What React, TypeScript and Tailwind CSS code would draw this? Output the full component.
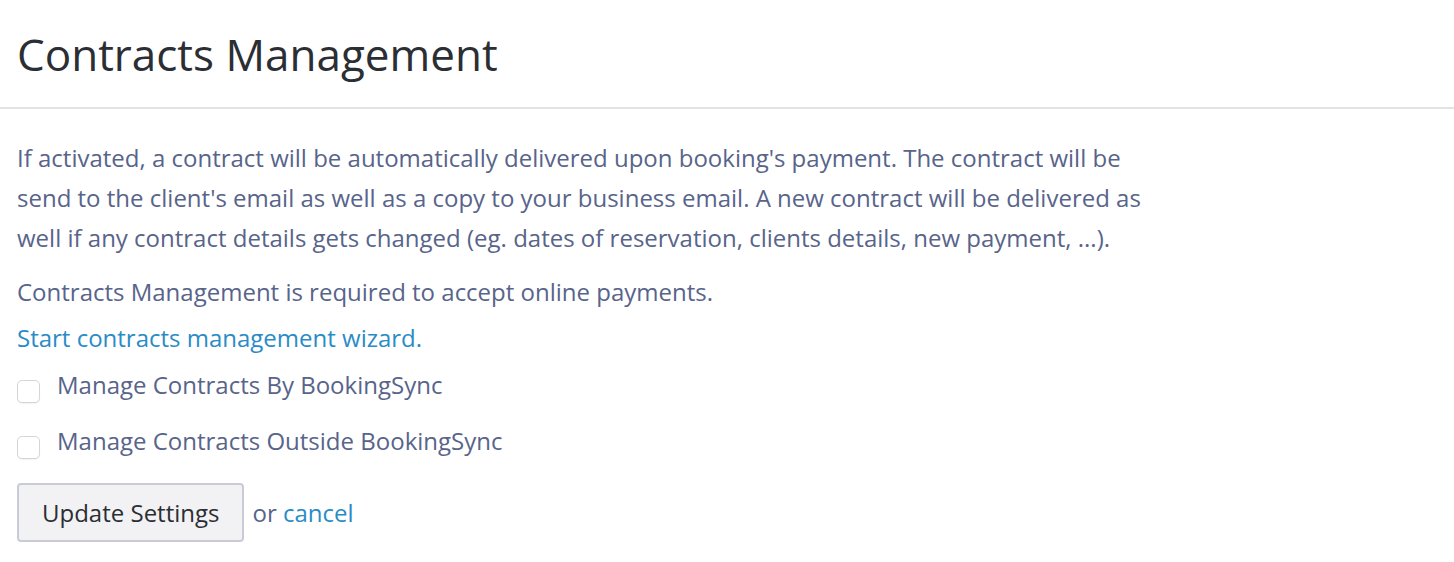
export default function App() {
  return (
    <div className="min-h-screen bg-white" style={{ fontFamily: '"Open Sans", sans-serif' }}>
      <header className="px-[17px] pt-[24px] pb-[23px] border-b-2 border-[#e3e3e3]">
        <h1 className="text-[44px] leading-[60px] text-[#2b2e33]">Contracts Management</h1>
      </header>
      <main className="px-[17px] text-[#58648a] text-[24px]">
        <p className="pt-[29px] leading-[40px] max-w-[1150px]">
          If activated, a contract will be automatically delivered upon booking's payment. The contract will be send to the client's email as well as a copy to your business email. A new contract will be delivered as well if any contract details gets changed (eg. dates of reservation, clients details, new payment, ...).
        </p>
        <p className="mt-[14px] leading-[40px]">Contracts Management is required to accept online payments.</p>
        <a href="#" className="block leading-[40px] mt-[6px] text-[#2a8cc6]">Start contracts management wizard.</a>
        <label className="flex items-center gap-[17px] h-[46px] mt-[4px]">
          <span className="w-[23px] h-[23px] mt-[12px] rounded-[5px] border border-[#d3d5da] bg-white shadow-[0_1px_1px_rgba(0,0,0,0.05)] shrink-0" />
          <span>Manage Contracts By BookingSync</span>
        </label>
        <label className="flex items-center gap-[17px] h-[46px] mt-[10px]">
          <span className="w-[23px] h-[23px] mt-[12px] rounded-[5px] border border-[#d3d5da] bg-white shadow-[0_1px_1px_rgba(0,0,0,0.05)] shrink-0" />
          <span>Manage Contracts Outside BookingSync</span>
        </label>
        <div className="flex items-center gap-[8px] mt-[19px]">
          <button className="h-[59px] px-[23px] rounded-[4px] border-2 border-[#c9ccd6] bg-[#f2f2f4] text-[#2b2e33] text-[24px]">
            Update Settings
          </button>
          <span>
            or <a href="#" className="text-[#2a8cc6]">cancel</a>
          </span>
        </div>
      </main>
    </div>
  );
}
